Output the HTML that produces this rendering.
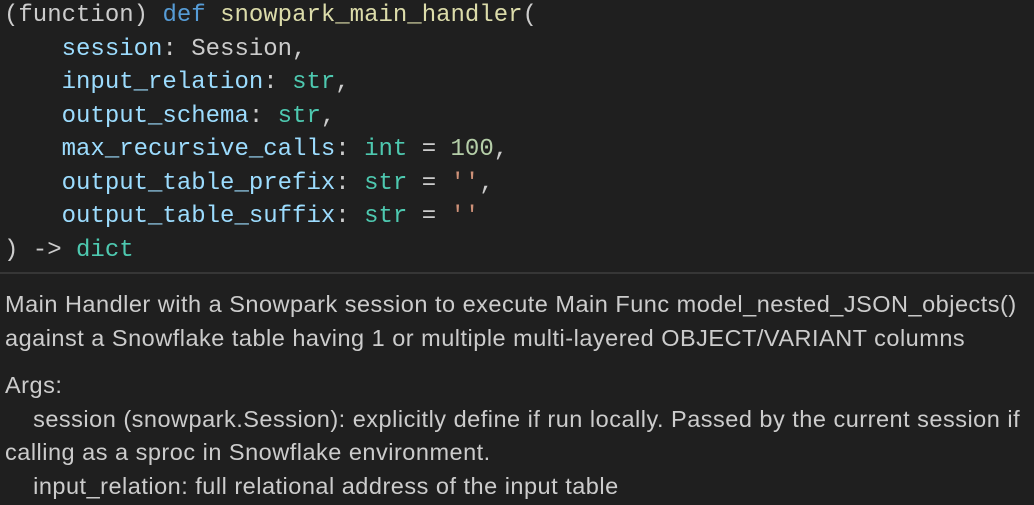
<!DOCTYPE html>
<html><head><style>
html,body{margin:0;padding:0;background:#1f1f1f;width:1034px;height:505px;overflow:hidden}
.code{font-family:"Liberation Mono",monospace;font-size:24px;line-height:33.5px;color:#cccccc;white-space:pre;padding:0 0 0 4px;margin-top:-1px;height:273px;box-sizing:border-box}
.sep{height:2px;background:#363636;margin-top:0}
.doc{font-family:"Liberation Sans",sans-serif;font-size:23.5px;line-height:33.5px;color:#cccccc;padding:14px 0 0 5px;letter-spacing:0.5px}
.p{margin:0 0 14px 0}
.k{color:#569cd6}.f{color:#dcdcaa}.v{color:#9cdcfe}.t{color:#4ec9b0}.n{color:#b5cea8}.s{color:#ce9178}
</style></head><body>
<div class="code">(function) <span class="k">def</span> <span class="f">snowpark_main_handler</span>(
    <span class="v">session</span>: Session,
    <span class="v">input_relation</span>: <span class="t">str</span>,
    <span class="v">output_schema</span>: <span class="t">str</span>,
    <span class="v">max_recursive_calls</span>: <span class="t">int</span> = <span class="n">100</span>,
    <span class="v">output_table_prefix</span>: <span class="t">str</span> = <span class="s">''</span>,
    <span class="v">output_table_suffix</span>: <span class="t">str</span> = <span class="s">''</span>
) -&gt; <span class="t">dict</span></div>
<div class="sep"></div>
<div class="doc">
<div class="p">Main Handler with a Snowpark session to execute Main Func model_nested_JSON_objects()<br>against a Snowflake table having 1 or multiple multi-layered OBJECT/VARIANT columns</div>
<div>Args:<br>&nbsp;&nbsp;&nbsp;&nbsp;session (snowpark.Session): explicitly define if run locally. Passed by the current session if<br>calling as a sproc in Snowflake environment.<br>&nbsp;&nbsp;&nbsp;&nbsp;input_relation: full relational address of the input table</div>
</div>
</body></html>
